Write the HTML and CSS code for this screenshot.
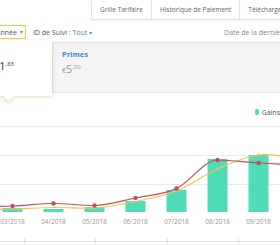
FILE: index.html
```html
<!DOCTYPE html>
<html lang="fr">
<head>
    <meta charset="UTF-8">
    <meta name="viewport" content="width=device-width, initial-scale=1.0">
    <title>Rapports</title>
    <link rel="stylesheet" href="styles.css">
</head>
<body>

<div class="tabs">
    <div class="tab">Grille Tarifaire</div>
    <div class="tab">Historique de Paiement</div>
    <div class="tab">Télécharger les rapports</div>
</div>

<div class="filters">
    <div class="select">Année <span class="caret">&#9662;</span></div>
    <div class="filter">ID de Suivi : <span class="val">Tout</span> <span class="caret">&#9662;</span></div>
    <div class="updated">Date de la dernière mise à jour : 10/09/2018</div>
</div>

<div class="cards">
    <div class="card selected">
        <div class="card-label">Gains</div>
        <div class="card-value"><span class="cur">€</span><span class="num">31</span><sup>,83</sup></div>
    </div>
    <div class="card">
        <div class="card-label">Primes</div>
        <div class="card-value muted"><span class="cur">€</span><span class="num">5</span><sup>,00</sup></div>
    </div>
</div>

<div class="legend">
    <span class="dot"></span> Gains
</div>

<svg class="chart" width="280" height="125" viewBox="0 0 280 125">
    <g stroke="#ebebeb" stroke-width="1">
        <line x1="0" y1="7.5" x2="280" y2="7.5"/>
        <line x1="0" y1="36.5" x2="280" y2="36.5"/>
        <line x1="0" y1="65.5" x2="280" y2="65.5"/>
    </g>
    <g fill="#50dbb9">
        <rect x="2.5" y="89" width="20" height="4"/>
        <rect x="43.5" y="90" width="20" height="3"/>
        <rect x="84.5" y="88" width="20" height="5"/>
        <rect x="125.5" y="82" width="20" height="11"/>
        <rect x="166.5" y="71" width="20" height="22"/>
        <rect x="207.5" y="40" width="20" height="53"/>
        <rect x="248.5" y="36" width="20" height="57"/>
    </g>
    <path fill="none" stroke="#f3c452" stroke-width="1.2"
          d="M -28.5 91 C -14.83 90.67, -1.17 90.42, 12.5 90
             C 26.17 89.58, 39.83 88.67, 53.5 88.5
             C 67.17 88.33, 80.83 89.5, 94.5 89
             C 108.17 88, 121.83 85.33, 135.5 82.5
             C 149.17 79.67, 162.83 77.42, 176.5 72
             C 190.17 66.58, 203.83 56, 217.5 50
             C 231.17 44, 244.83 37.67, 258.5 36
             C 272.17 34.33, 285.83 38.33, 299.5 40"/>
    <g fill="#f3c452">
        <circle cx="258.5" cy="36" r="1.4"/>
        <circle cx="217.5" cy="50" r="1.2"/>
    </g>
    <path fill="none" stroke="#bf4d5c" stroke-width="1.2"
          d="M -28.5 88 C -14.83 88, -1.17 87.58, 12.5 87
             C 26.17 86.42, 39.83 84.5, 53.5 84.5
             C 67.17 84.5, 80.83 86.5, 94.5 86.5
             C 108.17 86.5, 121.83 81.83, 135.5 79
             C 149.17 76.17, 162.83 75.83, 176.5 69.5
             C 190.17 63.17, 203.83 41, 217.5 41
             C 231.17 41, 244.83 43.17, 258.5 44
             C 272.17 44.83, 285.83 45.5, 299.5 46"/>
    <g fill="#bf4d5c">
        <circle cx="12.5" cy="87" r="2.2"/>
        <circle cx="53.5" cy="84.5" r="2.2"/>
        <circle cx="94.5" cy="86.5" r="2.2"/>
        <circle cx="135.5" cy="79" r="2.2"/>
        <circle cx="176.5" cy="69.5" r="2.2"/>
        <circle cx="217.5" cy="41" r="2.2"/>
        <circle cx="258.5" cy="44" r="2.2"/>
    </g>
    <g class="axis" text-anchor="middle">
        <text x="12.5" y="104.5">03/2018</text>
        <text x="53.5" y="104.5">04/2018</text>
        <text x="94.5" y="104.5">05/2018</text>
        <text x="135.5" y="104.5">06/2018</text>
        <text x="176.5" y="104.5">07/2018</text>
        <text x="217.5" y="104.5">08/2018</text>
        <text x="258.5" y="104.5">09/2018</text>
    </g>
    <g stroke="#e2e2e2" stroke-width="1">
        <line x1="0" y1="122.5" x2="280" y2="122.5"/>
        <line x1="24.5" y1="119" x2="24.5" y2="125"/>
        <line x1="95.5" y1="119" x2="95.5" y2="125"/>
        <line x1="167.5" y1="119" x2="167.5" y2="125"/>
        <line x1="238.5" y1="119" x2="238.5" y2="125"/>
    </g>
</svg>

</body>
</html>
```

FILE: styles.css
```css
body {
    margin: 0;
    width: 280px;
    height: 245px;
    overflow: hidden;
    background: white;
    font-family: "Open Sans", Arial, sans-serif;
    font-size: 6.5px;
    color: #555;
    white-space: nowrap;
}
.tabs {
    display: flex;
    padding-left: 92px;
    height: 20px;
}
.tab {
    display: flex;
    align-items: center;
    padding: 0 8px;
    border: 1px solid #e3e3e3;
    border-top: none;
    margin-left: -1px;
    color: #666;
    background: white;
    box-shadow: 0 1px 2px rgba(0, 0, 0, 0.05);
}
.filters {
    display: flex;
    align-items: center;
    height: 14px;
    margin: 5px 0 0 -9px;
    font-size: 7px;
}
.select {
    display: flex;
    align-items: center;
    gap: 3px;
    height: 12px;
    padding: 0 2px 0 4px;
    border: 1px solid #ecc94b;
}
.caret {
    font-size: 6px;
    color: #888;
}
.filter {
    margin-left: 7px;
}
.filter .val {
    color: #3a8ed4;
}
.updated {
    margin-left: 132px;
    color: #888;
}
.cards {
    display: flex;
    align-items: flex-start;
    margin: 1px 0 0 -20px;
}
.card {
    padding: 6px 9px 0;
}
.card.selected {
    position: relative;
    width: 54px;
    height: 50px;
    background: white;
    box-shadow: 0 1px 4px rgba(170, 150, 60, 0.35);
    z-index: 1;
}
.card.selected::after {
    content: "";
    position: absolute;
    left: 25px;
    bottom: -4px;
    width: 7px;
    height: 7px;
    background: white;
    transform: rotate(45deg);
    box-shadow: 2px 2px 3px rgba(170, 150, 60, 0.25);
}
.card + .card {
    flex: 1;
    height: 43px;
    margin-top: 2px;
    padding-top: 6px;
    background: #f4f4f4;
    border: 1px solid #e6e6e6;
    border-right: none;
}
.card-label {
    font-size: 7.5px;
    font-weight: 700;
    color: #3a8ed4;
    height: 11px;
}
.card.selected .card-label {
    visibility: hidden;
}
.card-value {
    margin-top: 1px;
    color: #333;
}
.card-value .cur {
    font-size: 7px;
}
.card-value .num {
    font-size: 11px;
}
.card-value sup {
    font-size: 6px;
    vertical-align: 4px;
}
.card-value.muted {
    color: #999;
}
.legend {
    display: flex;
    align-items: center;
    gap: 3px;
    margin: 12px 0 0 255px;
    height: 8px;
    font-size: 7px;
    color: #555;
}
.dot {
    width: 6px;
    height: 6px;
    border-radius: 50%;
    background: #50dbb9;
}
.chart {
    display: block;
    margin-top: 3px;
}
.axis {
    font-family: "Open Sans", Arial, sans-serif;
    font-size: 6.5px;
    fill: #999;
}
```
